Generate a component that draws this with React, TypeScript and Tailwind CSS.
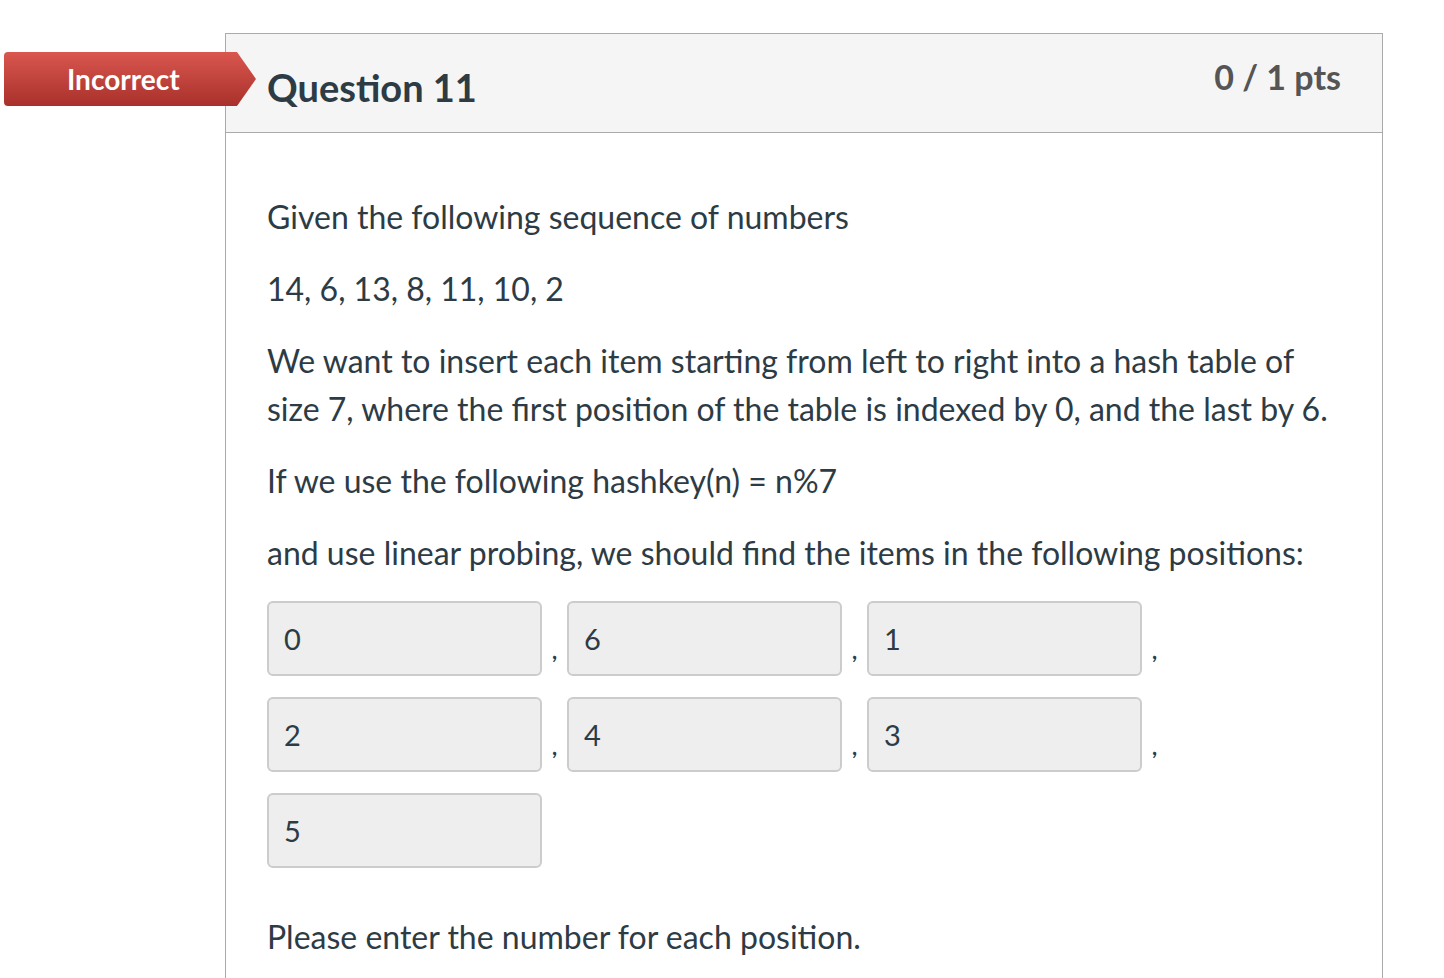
import React from 'react';

const rows: string[][] = [
  ['0', '6', '1'],
  ['2', '4', '3'],
  ['5'],
];

const AnswerBox: React.FC<{ value: string }> = ({ value }) => (
  <div className="w-[275px] h-[75px] bg-[#eeeeee] border-2 border-[#cccccc] rounded-[6px] flex items-center pl-[15px] text-[29px] text-[#2d3b45]">
    {value}
  </div>
);

const App: React.FC = () => {
  return (
    <div className="relative min-h-screen bg-white font-['Lato','Noto_Sans',sans-serif] text-[#2d3b45] overflow-hidden">
      {/* Incorrect badge sits over the card edge */}
      <div className="absolute left-[4px] top-[52px] w-[252px] h-[54px] rounded-l-[4px] bg-gradient-to-b from-[#d9574f] to-[#a9302b] [clip-path:polygon(0_0,calc(100%-19px)_0,100%_50%,calc(100%-19px)_100%,0_100%)] flex items-center pl-[63px] text-white text-[28px] font-bold">
        Incorrect
      </div>

      <div className="ml-[225px] mt-[33px] w-[1158px] border border-[#aaaaaa] border-b-0 h-[960px]">
        <div className="h-[99px] bg-[#f5f5f5] border-b border-[#aaaaaa] flex justify-between items-start pl-[41px] pr-[41px]">
          <h2 className="mt-[31px] text-[38px] font-bold leading-[44px] text-[#2d3b45]">Question 11</h2>
          <div className="mt-[23px] text-[34px] font-bold leading-[40px] text-[#555555]">0 / 1 pts</div>
        </div>

        <div className="pl-[41px] pr-[41px] pt-[60px] text-[32px] leading-[48px]">
          <p>Given the following sequence of numbers</p>
          <p className="mt-[24px]">14, 6, 13, 8, 11, 10, 2</p>
          <p className="mt-[24px]">
            We want to insert each item starting from left to right into a hash table of size 7, where the first position of the table is indexed by 0, and the last by 6.
          </p>
          <p className="mt-[24px]">If we use the following hashkey(n) = n%7</p>
          <p className="mt-[24px]">and use linear probing, we should find the items in the following positions:</p>

          <div className="mt-[24px] flex flex-col gap-[21px]">
            {rows.map((row, ri) => (
              <div key={ri} className="flex">
                {row.map((v, ci) => (
                  <div key={ci} className="flex">
                    <AnswerBox value={v} />
                    {ri < 2 && (
                      <span className="w-[25px] flex justify-center items-end pb-[14px] text-[22px] font-bold leading-none">,</span>
                    )}
                  </div>
                ))}
              </div>
            ))}
          </div>

          <p className="mt-[45px]">Please enter the number for each position.</p>
        </div>
      </div>
    </div>
  );
};

export default App;
